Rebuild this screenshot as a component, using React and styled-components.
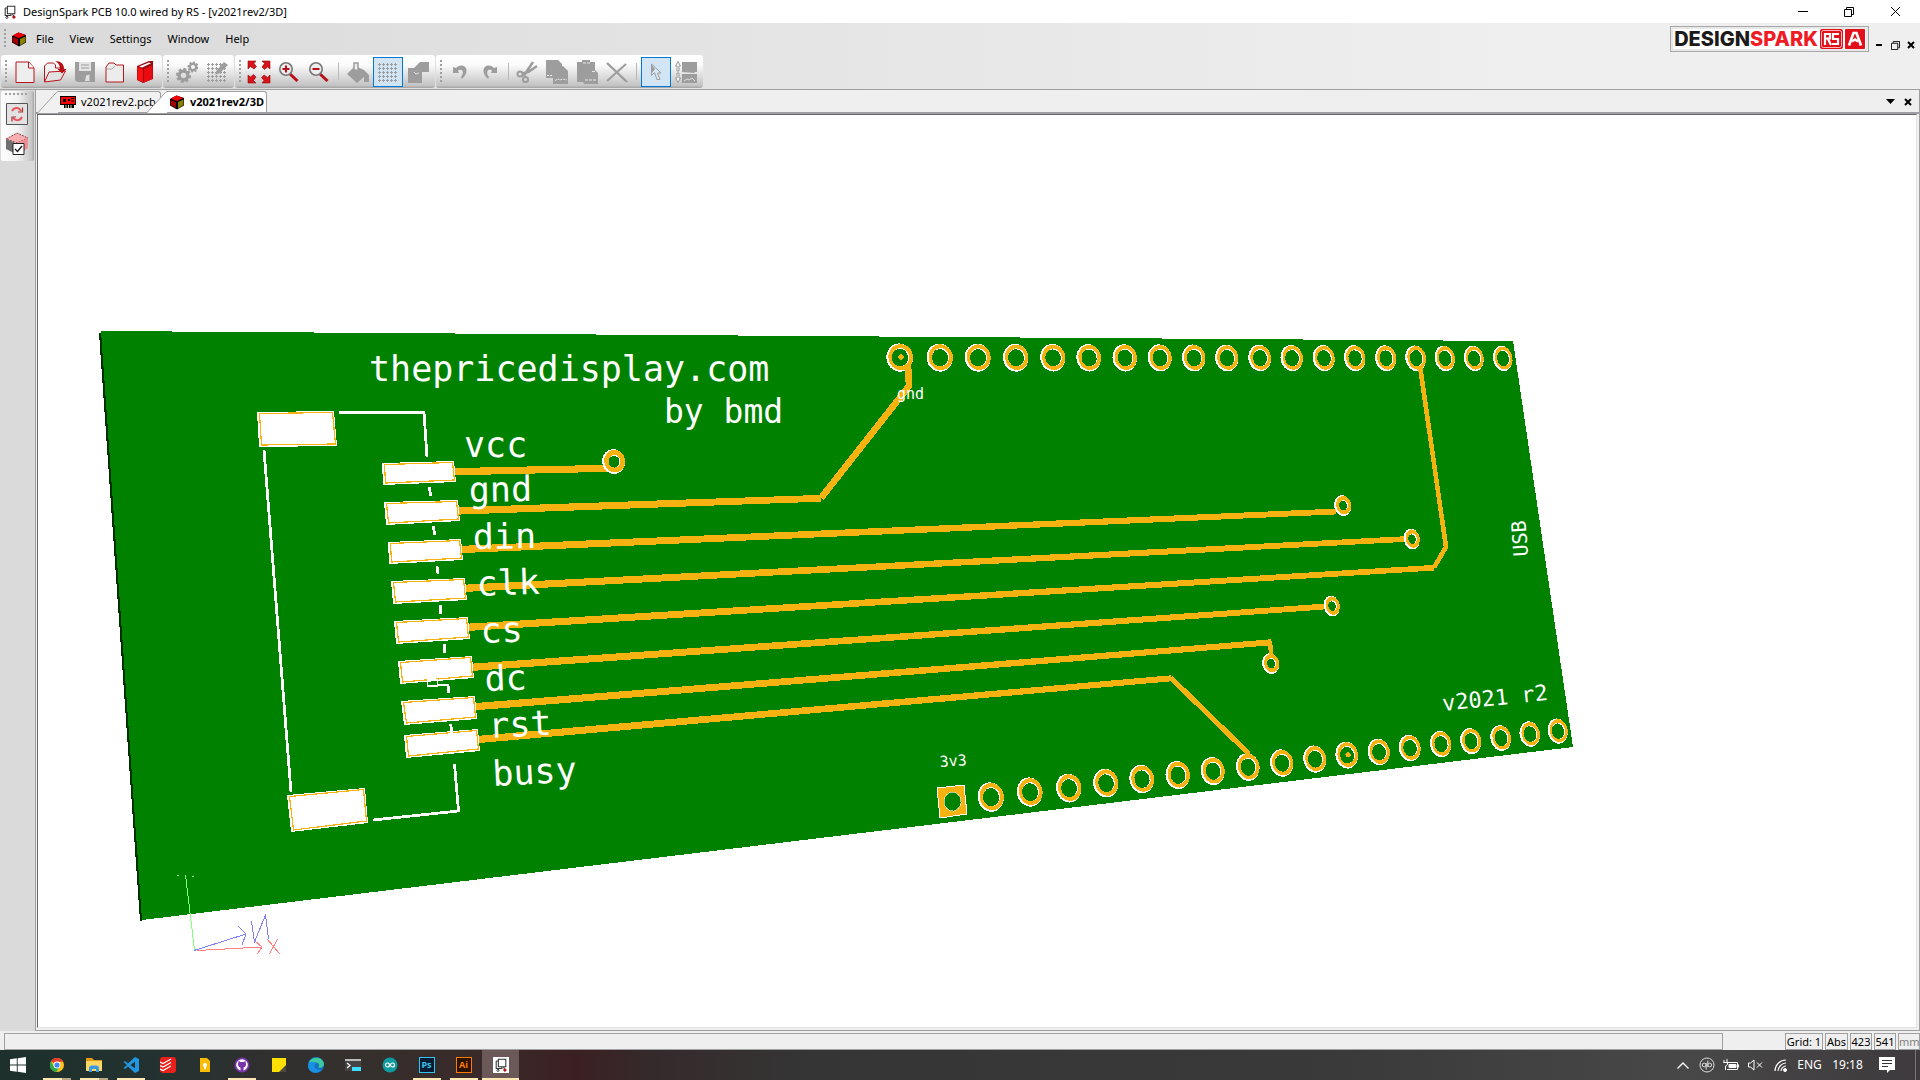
import React from "react";
import styled, { createGlobalStyle, css } from "styled-components";

const ui = `"Noto Sans", "Open Sans", sans-serif`;

const Global = createGlobalStyle`
  * { box-sizing: border-box; }
  body { margin: 0; overflow: hidden; background: #f0f0f0; }
  button { font: inherit; color: inherit; background: none; border: 0; padding: 0; margin: 0; }
  svg { display: block; flex: none; }
`;

const Shell = styled.div`
  display: flex;
  flex-direction: column;
  height: 100vh;
  font: 12px/16px ${ui};
  color: #000;
`;

/* ---------- title bar ---------- */
const TitleBar = styled.header`
  display: flex;
  align-items: center;
  flex: none;
  height: 23px;
  padding: 0 2px 0 3px;
  gap: 6px;
  background: #fff;
`;
const Title = styled.h1`
  flex: 1;
  margin: 0;
  font: 11px/16px ${ui};
  font-weight: 400;
`;
const WindowButtons = styled.div`
  display: flex;
`;
const WindowButton = styled.button`
  width: 46px;
  height: 20px;
  display: flex;
  align-items: center;
  justify-content: center;
`;

/* ---------- menu and tool bars ---------- */
const Chrome = styled.div`
  flex: none;
  background: linear-gradient(90deg, #dadada, #efefef 80%);
  border-bottom: 1px solid #a0a0a0;
`;
const MenuBar = styled.nav`
  display: flex;
  align-items: center;
  height: 32px;
  padding-left: 4px;
`;
const Grip = styled.i`
  flex: none;
  width: ${(p) => (p.$flat ? "24px" : "2px")};
  height: ${(p) => (p.$flat ? "2px" : p.$tall ? "24px" : "20px")};
  background: repeating-linear-gradient(${(p) => (p.$flat ? "90deg" : "180deg")}, #a0a0a0 0 2px, transparent 2px 4px);
`;
const MenuItems = styled.div`
  display: flex;
  flex: 1;
  gap: 16px;
  margin-left: 9px;
  font-size: 11px;
`;
const CubeSlot = styled.span`
  margin-left: 5px;
`;
const Brand = styled.div`
  display: flex;
  align-items: center;
  height: 26px;
  border: 1px solid #a8a8a8;
  padding: 2px;
  background: #e8e8e8;
  margin-right: 2px;
`;
const BrandFace = styled.div`
  display: flex;
  align-items: center;
  gap: 2px;
  height: 20px;
  padding: 0 1px;
  background: #fff;
  font: 800 20px/20px Inter, "Liberation Sans", sans-serif;
  color: #1d1a1b;
`;
const BrandRed = styled.span`
  color: #ee1c25;
`;
const MdiButton = styled.button`
  width: 16px;
  height: 16px;
  display: flex;
  align-items: center;
  justify-content: center;
`;
const MdiButtons = styled.div`
  display: flex;
  align-items: center;
  padding: 12px 1px 0 0;
`;
const ToolRow = styled.div`
  display: flex;
  gap: 1px;
  height: 34px;
  padding: 0 1px 1px;
`;
const ToolGroup = styled.div`
  display: flex;
  align-items: center;
  height: 33px;
  padding: 0 2px 0 4px;
  border-radius: 3px;
  background: linear-gradient(#fff 0, #fbfbfb 30%, #c2c2c2 94%, #a9a9a9 97%);
`;
const Tools = styled.div`
  display: flex;
  align-items: center;
  padding-left: 3px;
`;
const ToolButton = styled.button`
  width: 30px;
  height: 30px;
  display: flex;
  align-items: center;
  justify-content: center;
  ${(p) =>
    p.$on &&
    css`
      background: #d1e5f5;
      border: 1px solid #0078d7;
    `}
`;
const Separator = styled.i`
  width: 1px;
  height: 17px;
  margin: 0 ${(p) => (p.$tight ? 3 : 4)}px;
  background: #b9b9b9;
`;

/* ---------- work area ---------- */
const Work = styled.div`
  display: flex;
  flex: 1;
  min-height: 0;
`;
const Side = styled.aside`
  flex: none;
  width: 35px;
  background: #dadada;
  padding: 1px 1px 0;
`;
const SidePanel = styled.div`
  display: flex;
  flex-direction: column;
  align-items: center;
  height: 70px;
  padding: 2px 2px 0 0;
  border-radius: 2px;
  background: linear-gradient(90deg, #fdfdfd, #f3f3f3 50%, #c4c4c4 94%, #a2a2a2);
`;
const SideTools = styled.div`
  padding-top: 4px;
`;
const Doc = styled.section`
  display: flex;
  flex-direction: column;
  flex: 1;
  min-width: 0;
  border: solid #a0a0a0;
  border-width: 0 1px 1px;
`;
const TabStrip = styled.div`
  display: flex;
  flex: none;
  height: 24px;
  padding: 1px 0 0 2px;
  background: #efefef;
  border-bottom: 2px solid #a0a0a4;
`;
const Tab = styled.button`
  display: flex;
  height: 22px;
  font-size: 11px;
  font-weight: ${(p) => (p.$active ? 700 : 400)};
  & + & { margin-left: -14px; }
`;
const TabBody = styled.span`
  display: flex;
  align-items: center;
  gap: 5px;
  height: 21px;
  width: ${(p) => (p.$active ? "100px" : "103px")};
  white-space: nowrap;
  padding-left: 2px;
  border: solid #a0a0a4;
  border-width: 1px 1px 0 0;
  border-top-right-radius: 3px;
  background: ${(p) => (p.$active ? "#fff" : "#f1f1f1")};
`;
const TabTools = styled.div`
  display: flex;
  align-items: center;
  margin-left: auto;
  gap: 2px;
  padding-right: 3px;
`;
const Frame = styled.main`
  flex: 1;
  min-height: 0;
  margin: 0 2px 2px 1px;
  border: 1px solid #696969;
  border-right-color: #e3e3e3;
  border-bottom-color: #e3e3e3;
  background: #fff;
`;
const Scene = styled.svg`
  width: 100%;
  height: 100%;
  overflow: hidden;
  text {
    fill: #fff;
    font-family: "DejaVu Sans Mono", monospace;
    white-space: pre;
  }
`;

/* ---------- status bar ---------- */
const Status = styled.footer`
  display: flex;
  flex: none;
  gap: 2px;
  height: 19px;
  padding: 2px 0 0 4px;
  background: #efefef;
  font-size: 11px;
`;
const Cell = styled.span`
  width: ${(p) => p.$w}px;
  height: 17px;
  overflow: hidden;
  border: 1px solid #a0a0a0;
  text-align: center;
  white-space: nowrap;
  line-height: 16px;
  color: ${(p) => (p.$dim ? "#808080" : "#000")};
`;
const Message = styled.span`
  flex: 1;
  border: 1px solid #a0a0a0;
  margin-right: 60px;
`;

/* ---------- taskbar ---------- */
const Taskbar = styled.nav`
  display: flex;
  flex: none;
  height: 30px;
  color: #fff;
  background: linear-gradient(90deg, #1d302b 0, #233230 8%, #30302f 14%, #35302d 19%, #3a2829 26%, #3b2023 30%, #352a2b 34%, #353535 42%, #3a3a3a 70%, #484848 88%, #3e3a3d 100%);
`;
const Tasks = styled.div`
  display: flex;
  margin-left: 2px;
`;
const Task = styled.button`
  position: relative;
  display: flex;
  align-items: center;
  justify-content: center;
  width: 37px;
  height: 30px;
  background: ${(p) => (p.$active ? "#6b595a" : "transparent")};
  ${(p) =>
    p.$open &&
    css`
      &::after {
        content: "";
        position: absolute;
        bottom: 0;
        left: ${p.$active ? 0 : 5}px;
        right: ${p.$active ? 0 : 4}px;
        height: 2px;
        background: linear-gradient(90deg, #ffe8b4 ${p.$many ? "68%" : "100%"}, #b8a888 0);
      }
    `}
`;
const StartButton = styled(Task)`
  width: 36px;
`;
const Tray = styled.div`
  display: flex;
  align-items: center;
  margin-left: auto;
  font-size: 12px;
`;
const TrayButton = styled.button`
  width: ${(p) => p.$w || 24}px;
  height: 30px;
  display: flex;
  align-items: center;
  justify-content: center;
`;
const ShowDesktop = styled.button`
  width: 5px;
  height: 30px;
  margin-left: 10px;
  border-left: 1px solid #77757a;
`;

/* ---------- icons ---------- */
const S = ({ w = 22, h = w, vb, children, ...r }) => (
  <svg width={w} height={h} viewBox={vb || `0 0 ${w} ${h}`} fill="none" aria-hidden="true" {...r}>
    {children}
  </svg>
);
const G = "#9d9d9d";

const Cube = ({ size = 16 }) => (
  <S w={size} vb="0 0 16 16">
    <path d="M1 5 7.500 1.500 15 4v7.500L8 15.500 1 11.500z" fill="#000" />
    <path d="M1.500 4.500 7.500 1.500l7 2.500L8 7z" fill="#f00000" />
    <path d="M1.500 6 7 8v6L1.500 11z" fill="#a00000" />
    <path d="M9 8l5.500-2.500V11L9 14.500z" fill="#8a8000" />
  </S>
);
const AppMark = ({ size = 14 }) => (
  <S w={size} vb="0 0 16 16" stroke="#333">
    <path d="M5 1.500h8.500V10H5zM2.500 3.500V12H9V9.500M2.500 3.500h2M11 10.500l1 2M5 12v2" strokeWidth="1.200" />
    <circle cx="4.500" cy="14.200" r="1.200" />
    <circle cx="12.500" cy="13.800" r="1.400" fill="#c00" stroke="#a22" />
  </S>
);
const NewDoc = () => (
  <S><path d="M2 1h13l5 6v14.500H2z" fill="#eee" stroke="#b3161b" /><path d="M14.500 1v6H20" fill="#fff" stroke="#b3161b" /></S>
);
const OpenDoc = () => (
  <S w={24} h={24}><path d="M1.500 22V6l3-3h6l2 2v3h7v4" fill="#f3f3f3" stroke="#b3161b" /><path d="M1.500 22 6 12l16.500-1-5 9z" fill="#e2e2e2" stroke="#b3161b" />
    <path d="M12 1c6 0 9 3 9 8h2.500L19 13.500 14.500 9H17c0-3-1-6-5-8z" fill="#b80f16" /></S>
);
const Save = () => (
  <S><path d="M1 1h20v20H3l-2-2z" fill={G} /><path d="M5 1h12v9H5z" fill="#e4e4e4" /><path d="M7 4h8M7 7h8" stroke={G} /><path d="M12 14.500l3.500-1V20H11z" fill="#e0e0e0" /></S>
);
const Folder = () => (
  <S><path d="M2 21V6l3-4h5l2 2h7.500v17z" fill="#ececec" stroke="#b3161b" /><path d="M2.500 8H8l3-3" stroke="#aaa" /></S>
);
const Book = () => (
  <S><path d="M3 5 15 0h4v18l-10 4-6-3z" fill="#9b0a10" /><path d="M3.500 6 9 8v13l-5.500-2z" fill="#f11" /><path d="M10 8l8.500-4v14L10 21.500z" fill="#e80c12" /><path d="M5 5.500l10-4 2 .8L8 6.500z" fill="#fff" /></S>
);
const Gear = ({ x, y, r }) => (
  <g transform={`translate(${x} ${y})`} stroke={G}>
    <circle r={r * 0.58} strokeWidth={r * 0.42} />
    {[0, 45, 90, 135].map((a) => (
      <path key={a} transform={`rotate(${a + 12})`} d={`M0 ${-r}V${-r * 0.6}M0 ${r * 0.6}V${r}`} strokeWidth={r * 0.4} />
    ))}
  </g>
);
const Gears = () => (<S><Gear x={7.5} y={14.500} r={7.500} /><Gear x={17} y={6} r={5.500} /></S>);
const Dots = ({ children }) => (
  <S w={22}>
    <path d="M1 3.500h20M1 7.500h20M1 11.500h20M1 15.500h20M1 19.500h20" stroke={G} strokeDasharray="3 1" />
    <path d="M2.500 2v20M6.500 2v20M10.500 2v20M14.500 2v20M18.500 2v20" stroke={G} strokeDasharray="3 1" />
    {children}
  </S>
);
const GridEdit = () => (<Dots><path d="M9 14l2-5 7-8 4 3-8 8z" fill={G} /></Dots>);
const Fit = () => (
  <S w={24}>
    {[0, 90, 180, 270].map((a) => (
      <path key={a} transform={`rotate(${a} 12 12)`} d="M1 1h8L7 3.500l2.500 3-2.500 2.500-3.500-2.500L1 9z" fill="#d8141a" stroke="#8c0a0e" strokeWidth=".6" />
    ))}
  </S>
);
const Zoom = ({ plus }) => (
  <S><path d="M12 13l7.500 7" stroke="#b80f16" strokeWidth="3" /><circle cx="8" cy="8" r="6.200" fill="#eee" stroke="#777" strokeWidth="1.600" />
    <path d={plus ? "M4.500 8h7M8 4.500v7" : "M4.500 8h7"} stroke="#b80f16" strokeWidth="2" /></S>
);
const Bucket = () => (
  <S><path d="M0 13 8 5l9 4 5 5v7h-5v-5l-7 6z" fill={G} /><path d="M7 8V2h4v7" stroke={G} strokeWidth="1.500" fill="#eee" /></S>
);
const Shape = () => (<S><path d="M1 7h6l6-6h9v10h-7v12H1z" fill={G} /><path d="M7 11l2 2 3-1" stroke="#ddd" /></S>);
const Undo = ({ flip }) => (
  <S w={14} h={16} style={flip ? { transform: "scaleX(-1)" } : undefined}>
    <path d="M0 3l3 1c4-4 10-3 10.500 2 .2 4-2 6.500-4.500 9l-1-2c1.500-2 2.500-4 1.500-6S6.500 5.500 5 6.500L6 9H0z" fill={G} />
  </S>
);
const Scissors = () => (
  <S stroke={G} strokeWidth="2"><path d="M17 1 11 10 7.500 15M21 5l-8 5.500-6 2" strokeWidth="2.600" /><circle cx="4" cy="13" r="2.500" /><circle cx="9.500" cy="18.500" r="2.600" /></S>
);
const Copy = () => (
  <S w={24}><path d="M1 0h12l4 4v14H1z" fill={G} /><path d="M8 6h10l5 5v13H8z" fill={G} /><path d="M2 15.500h5M10 20.500l3-1.500 2 1 3-1 4 1" stroke="#eee" strokeDasharray="2 1" /></S>
);
const Paste = () => (
  <S w={22} h={24}><path d="M1 2h5V0h8v2h5v8l3 3v11H8l-1-2H1z" fill={G} /><path d="M7 3h7M9 20h11M16 11.500h3" stroke="#e6e6e6" strokeDasharray="3 1" /></S>
);
const Cross = () => (<S w={22} stroke={G}><path d="M1 2l20 19" strokeWidth="2.400" /><path d="M20 3 1 20" strokeWidth="2" /></S>);
const Pointer = () => (
  <S w={12} h={18}><path d="M1.500 1v11.500l3-3 2.500 7h3l-2.500-6.500H11z" stroke={G} fill="#dbe9f4" /><path d="M1 1v10l4-5z" fill={G} /></S>
);
const Swap = () => (
  <S w={24}><path d="M8 2h15v10h-2l-1 1-12-1zM8 14h15v9H8z" fill={G} /><path d="M4 1.500 6.500 6H5v5H3V6H1.500zM4 22.500 6.500 18H5v-5H3v5H1.500z" fill="#eee" stroke={G} /><path d="M10 21l3-2 2 1 3-2 3 3" stroke="#ddd" /></S>
);
const Refresh = () => (
  <S w={22}><path d="M.5.500h21v21H.5z" fill="#e2e2e2" stroke="#555" />
    <path d="M6 8c2-4 7-4 9 0M16 14c-2 4-6 4-9 1" stroke="#e5555a" strokeWidth="2" />
    <path d="M16.500 4.500V9H12M6 18.500V14h4" stroke="#a33" strokeWidth="1.200" /></S>
);
const CubeCheck = () => (
  <S w={24}><path d="M1 7 12 1l11 5-11 5z" fill="#f9adb0" stroke="#844" strokeDasharray="2 1" /><path d="M1 7l8 3v11l-8-4z" fill="#707070" /><path d="M12 11l11-5v10l-4 3z" fill="#f19094" />
    <path d="M8 11.500h11v11H8z" fill="#fff" stroke="#222" /><path d="M10 17l2.500 2.500L17 14" stroke="#222" strokeWidth="1.500" /></S>
);
const PcbIcon = () => (
  <S w={16} h={14}><path d="M0 1h16v9h-2v3H4v-3H0z" fill="#000" /><path d="M1 2h14v7H1z" fill="#f00" /><path d="M3 4h3v3H3zM8 4h2v2H8z" fill="#000" /><path d="M11 3.500h3M11 6h3" stroke="#000" /><path d="M6 10v3M8.500 10v3M11 10v3" stroke="#dca" /></S>
);
const XMark = ({ size = 10, weight = 1 }) => (<S w={size} stroke="#000" strokeWidth={weight}><path d={`M1 1l${size - 2} ${size - 2}M${size - 1} 1l${2 - size} ${size - 2}`} /></S>);
const Minus = ({ size = 10, weight = 1 }) => (<S w={size} h={2} stroke="#000" strokeWidth={weight}><path d={`M0 ${weight / 2}h${size}`} /></S>);
const Restore = ({ size = 10 }) => (<S w={size} vb="0 0 10 10" stroke="#000"><path d="M.5 2.500h7v7h-7zM2.500 2V.5h7v7H8" /></S>);

const RsMark = () => (
  <S w={23} h={20} vb="0 0 23 20"><rect width="23" height="20" rx="2" fill="#e2101a" /><rect x="1.500" y="1.500" width="20" height="17" rx="2" stroke="#fff" strokeWidth=".7" />
    <path d="M5 16V5h5v4.500H6M8 10l3 6M19 5h-6v5h5v5h-6" stroke="#fff" strokeWidth="2.200" /></S>
);
const AMark = () => (
  <S w={20}><rect width="20" height="20" rx="1" fill="#e2101a" /><path d="M4 16.500 8.500 4h3L16 16.500M7 12.500l3-2 3 2" stroke="#fff" strokeWidth="2.600" /></S>
);

/* taskbar icons */
const Win = () => (<S w={16}><path d="M0 2.300 6.800 1.300v6.300H0zM7.700 1.200 16 0v7.600H7.700zM0 8.500h6.800v6.200L0 13.700zM7.700 8.500H16V16l-8.300-1.200z" fill="#fff" /></S>);
const ChromeIcon = () => (
  <S w={16}><circle cx="8" cy="8" r="7" fill="#fcc31e" /><path d="M8 8 2 4.200A7 7 0 0 1 14.200 4.800H8z" fill="#e33b2e" /><path d="M8 8l-2.500 3L2 4.300A7 7 0 0 0 7.300 15L11 9.500z" fill="#2da94f" /><circle cx="8" cy="8" r="3.400" fill="#fff" /><circle cx="8" cy="8" r="2.600" fill="#4285f4" /></S>
);
const Files = () => (<S w={16}><path d="M0 1h6l2 2h8v4H0z" fill="#e19a10" /><path d="M0 4h16v10H0z" fill="#fdd663" /><path d="M3 15v-5l2-1.500h6l2 1.500v5h-3v-3H6v3z" fill="#3a9be6" /></S>);
const Code = () => (<S w={16}><path d="M12 0l4 2v12l-4 2-7-6.500L2 12 .5 11l3.500-3L.5 5 2 4l3 2.500zM12 4.500 7.500 8l4.500 3.500z" fill="#2196e3" fillRule="evenodd" /></S>);
const Todo = () => (<S w={16}><rect width="16" height="16" rx="3" fill="#e8211a" /><path d="M0 5l3 1.500L11 2M0 8.500 3 10l8-4.500M0 12l3 1.500L11 9" stroke="#fff" strokeWidth="1.200" /></S>);
const Keep = () => (<S w={16}><path d="M3 1h7l3 3v11H3z" fill="#fbbc04" /><circle cx="8" cy="8" r="2" fill="#fff" /><path d="M7 10h2v2H7z" fill="#fff" /></S>);
const Hub = () => (<S w={16}><circle cx="8" cy="8" r="7.500" fill="#7a32a8" /><circle cx="8" cy="8" r="5.800" fill="#fff" /><path d="M4.500 4l2 1h3l2-1 .5 3.500c0 2-1.500 3-2.500 3V14h-3v-3.500C5 10.500 4 9 4 7.500z" fill="#7a32a8" /></S>);
const Note = () => (<S w={16}><path d="M1 1h14v8l-6 6H1z" fill="#ffe000" /><path d="M15 8v7H8z" fill="#4a4a40" /></S>);
const Edge = () => (<S w={16}><circle cx="8" cy="8" r="8" fill="#1272c4" /><path d="M1 5C4-1 15-1 16 7c0 3-3 4.500-6 3.500 2-1.500 1-5-2-5S2 7 1 5z" fill="#3cc8a0" /><path d="M0 8c1-4 7-4 8-1-3 1-2 6 5 6-4 4.500-13 3.500-13-5z" fill="#1b8fe0" /></S>);
const Term = () => (<S w={16}><path d="M0 2h16v12H0z" fill="#444" /><path d="M0 2h16v2H0z" fill="#bbb" /><path d="M2 6l3 2.500L2 11" stroke="#fff" strokeWidth="1.200" /><path d="M7 10h9v4H7z" fill="#3ddcff" /></S>);
const Ardu = () => (<S w={16}><circle cx="8" cy="8" r="7.500" fill="#0f9a9f" /><circle cx="5.500" cy="8" r="2" stroke="#fff" strokeWidth="1.200" /><circle cx="10.500" cy="8" r="2" stroke="#fff" strokeWidth="1.200" /></S>);
const AppLetter = styled.span`
  width: 16px;
  height: 16px;
  border: 1px solid ${(p) => p.$c};
  background: ${(p) => p.$bg};
  color: ${(p) => p.$c};
  font: 700 9px/13px "Open Sans", sans-serif;
  text-align: center;
`;
const White = styled.span`
  padding: 1px;
  background: #fff;
`;

/* ---------- board ---------- */
const ORANGE = "#f5b210";
const GREEN = "#008200";

const pads = [
  [257, 412, 334, 411, 337, 446, 259, 447],
  [382, 463, 454, 461, 456, 482, 383, 485],
  [384, 502, 458, 500, 460, 521, 386, 525],
  [388, 542, 461, 539, 463, 560, 389, 564],
  [391, 581, 465, 578, 467, 600, 393, 604],
  [394, 621, 468, 617, 470, 639, 396, 644],
  [398, 661, 472, 656, 474, 678, 400, 684],
  [401, 701, 475, 696, 477, 719, 404, 725],
  [404, 735, 478, 729, 480, 751, 406, 758],
  [287, 795, 365, 788, 368, 823, 291, 832],
];
const Pad = ({ p }) => {
  const [a, b, c, d, e, f, g, h] = p;
  return (
    <g>
      <polygon points={p.join(" ")} fill="#fff" />
      <polygon points={[a + 2.5, b + 1.5, c - 1.5, d + 1.5, e - 1.5, f - 2, g + 2.5, h - 2].join(" ")} stroke={ORANGE} strokeWidth="1.200" fill="none" />
    </g>
  );
};

/* straight copper run: x1, y1, x2, y2, with its thickness easing off with distance */
const runs = [
  [454, 471.7, 609, 468.3, 7.3, 7],
  [457, 511, 821, 498.3, 7.3, 6.8],
  [461, 549.5, 1336, 511.5, 7.3, 5.8],
  [465, 588.3, 1406, 539, 7.3, 5.6],
  [468, 627.3, 1434, 567.7, 7.3, 5.6],
  [472, 667.3, 1325, 606.5, 7.3, 5.8],
  [475, 706.7, 1271, 642.3, 7.3, 6],
  [478, 739.5, 1171, 678.3, 7.3, 6],
];
const bends = [
  ["821,498 909,386 908,364", 6.6],
  ["1434,567.500 1446,547 1420,366", 4.6],
  ["1270,641 1271,654", 4.4],
  ["1171,678 1247,752 1248,757", 5.2],
];
const topPins = [900, 940, 978, 1016, 1053, 1089, 1125, 1160, 1194, 1227, 1260, 1292, 1324, 1355, 1386, 1416, 1445, 1474, 1503];
const lowPins = [
  [991, 797], [1030, 792], [1069, 788], [1106, 783], [1142, 779], [1178, 775], [1213, 771], [1248, 767], [1282, 763],
  [1315, 759], [1347, 755], [1379, 752], [1410, 748], [1441, 744], [1471, 741], [1501, 738], [1530, 734], [1558, 731],
];
const vias = [[614, 461.500, 11.5, 12.500], [1343, 505.500, 8.500, 10.500], [1412, 539, 8, 10.500], [1332, 606, 8, 10.500], [1271, 663.500, 8.500, 10.500]];

const Ring = ({ x, y, rx, ry, hole = 0.64, dot }) => (
  <g transform={`rotate(-12 ${x} ${y})`}>
    <ellipse cx={x - 0.3} cy={y} rx={rx} ry={ry} fill="#fff" />
    <ellipse cx={x + 0.8} cy={y - 0.2} rx={rx - 1} ry={ry - 1.2} fill={ORANGE} />
    <ellipse cx={x + 0.8} cy={y - 0.2} rx={rx * hole} ry={ry * hole} fill="#fff" />
    <ellipse cx={x} cy={y + 0.2} rx={rx * hole - 0.3} ry={ry * hole - 0.4} fill={GREEN} />
    {dot && <circle cx={x + 1} cy={y} r="2.600" fill={ORANGE} />}
  </g>
);

const silk = [
  ["thepricedisplay.com", 369, 381, 0, 35],
  ["by bmd", 664, 423, 0, 33],
  ["vcc", 464, 457, 0, 35],
  ["gnd", 469, 502, -1, 35],
  ["din", 473, 549, -1, 35],
  ["clk", 477, 596, -2, 35],
  ["cs", 481, 643, -2, 35],
  ["dc", 485, 691, -2, 35],
  ["rst", 489, 738, -3, 35],
  ["busy", 493, 786, -3, 35],
  ["gnd", 897, 399, 0, 15],
  ["3v3", 940, 767, -4, 15],
  ["v2021 r2", 1443, 711, -6, 22],
  ["USB", 1528, 556, -94, 20],
];

const Board = () => (
  <Scene viewBox="38 115 1878 912" preserveAspectRatio="xMinYMin meet" role="img" aria-label="3D view of the circuit board">
    <g shapeRendering="crispEdges">
      <polygon points="99,333 102,333 143,920 140,921" fill="#003000" />
      <polygon points="101,331 1513,341 1573,747 142,920" fill={GREEN} />
      {runs.map(([x1, y1, x2, y2, a, b], i) => (
        <polygon key={i} fill={ORANGE} points={`${x1},${y1 - a / 2} ${x2},${y2 - b / 2} ${x2},${y2 + b / 2} ${x1},${y1 + a / 2}`} />
      ))}
      {topPins.map((x, i) => <Ring key={x} x={x} y={357.5 + i * 0.05} rx={13.3 - i * 0.2} ry={14.2 - i * 0.08} dot={i === 0} />)}
      {lowPins.map(([x, y], i) => <Ring key={x} x={x} y={y} rx={13 - i * 0.18} ry={14.800 - i * 0.12} dot={i === 10} />)}
      {vias.map(([x, y, rx, ry]) => <Ring key={x} x={x} y={y} rx={rx} ry={ry} hole={0.5} />)}
      <polygon points="937,788 964,785 967,814 940,818" fill={ORANGE} stroke="#fff" />
      <ellipse cx="952.500" cy="801.500" rx="8.500" ry="9.500" fill={GREEN} stroke="#fff" strokeWidth=".6" />
      {bends.map(([d, w]) => <polyline key={d} points={d} stroke={ORANGE} strokeWidth={w} fill="none" strokeLinejoin="round" />)}
      <ellipse cx="900" cy="357.500" rx="8" ry="8.800" fill={GREEN} />
      <circle cx="901" cy="357" r="2.800" fill={ORANGE} />
      <ellipse cx="1416" cy="358" rx="6" ry="8" fill={GREEN} />
      {pads.map((p) => <Pad key={p[0]} p={p} />)}
      <g stroke="#fff" fill="none" strokeWidth="2.800">
        <path d="M339 412.500H424L427 457M264 450 291 792M454.500 764l4 47L373 820" />
        <path d="M429.500 487l1 9M433.500 526l1 9M437 566l1 8M440.500 605v9M444.300 644v9M448 684l.6 9M450.700 724l1.300 9" strokeWidth="2.800" />
        <path d="M427.500 680h10v6h-10zM437.500 685h11" strokeWidth="1.200" />
      </g>
    </g>
    {silk.map(([t, x, y, a, size]) => (
      <text key={t + y} x={x} y={y} fontSize={size} transform={`rotate(${a} ${x} ${y})`}>{t}</text>
    ))}
    <g fill="none" shapeRendering="crispEdges">
      <path d="M185.500 875l9 75M177 875.500h2M192 876h2" stroke="#80ff80" />
      <path d="M194 950.500 246 934M238 926l8 8-4 11M251.500 921l3 21 11-27 3 24" stroke="#8080ff" />
      <path d="M197 950.500 262 947M255 941l7 6-4.500 7M267 939l13 15M277.500 939l-8 15" stroke="#ff8080" />
    </g>
  </Scene>
);

const fileTools = [["New", NewDoc], ["Open", OpenDoc], ["Save", Save], ["Open folder", Folder], ["Library", Book]];
const tasks = [
  ["Chrome", <ChromeIcon />, { $open: true, $many: true }],
  ["File Explorer", <Files />, { $open: true, $many: true }],
  ["Visual Studio Code", <Code />, { $open: true }],
  ["Todoist", <Todo />, {}],
  ["Keep", <Keep />, {}],
  ["GitHub", <Hub />, { $open: true }],
  ["Sticky Notes", <Note />, {}],
  ["Edge", <Edge />, {}],
  ["Terminal", <Term />, {}],
  ["Arduino", <Ardu />, {}],
  ["Photoshop", <AppLetter $c="#31c5f0" $bg="#071c33">Ps</AppLetter>, { $open: true }],
  ["Illustrator", <AppLetter $c="#ff7c00" $bg="#2a1200">Ai</AppLetter>, { $open: true }],
  ["DesignSpark PCB", <White><AppMark /></White>, { $open: true, $active: true }],
];

const Tool = ({ name, icon: Icon, on, ...rest }) => (
  <ToolButton aria-label={name} title={name} $on={on}><Icon {...rest} /></ToolButton>
);
const Slant = ({ active }) => (
  <S w={20} h={22}><path d="M0 22 17 3q2-2 3-2.500V22z" fill={active ? "#fff" : "#f1f1f1"} /><path d="M0 21.500 17 3q2-2 3-2.500" stroke="#a0a0a4" /></S>
);

export default function App() {
  return (
    <Shell>
      <Global />
      <TitleBar>
        <AppMark />
        <Title>DesignSpark PCB 10.0 wired by RS - [v2021rev2/3D]</Title>
        <WindowButtons>
          <WindowButton aria-label="Minimize"><Minus /></WindowButton>
          <WindowButton aria-label="Restore"><Restore /></WindowButton>
          <WindowButton aria-label="Close"><XMark size={11} /></WindowButton>
        </WindowButtons>
      </TitleBar>

      <Chrome>
        <MenuBar>
          <Grip />
          <CubeSlot><Cube /></CubeSlot>
          <MenuItems>
            {["File", "View", "Settings", "Window", "Help"].map((m) => <button key={m}>{m}</button>)}
          </MenuItems>
          <Brand>
            <BrandFace><span>DESIGN<BrandRed>SPARK</BrandRed></span><RsMark /><AMark /></BrandFace>
          </Brand>
          <MdiButtons>
            <MdiButton aria-label="Minimize document"><Minus size={6} weight={2} /></MdiButton>
            <MdiButton aria-label="Restore document"><Restore size={9} /></MdiButton>
            <MdiButton aria-label="Close document"><XMark size={8} weight={2} /></MdiButton>
          </MdiButtons>
        </MenuBar>
        <ToolRow>
          <ToolGroup><Grip $tall /><Tools>{fileTools.map(([n, I]) => <Tool key={n} name={n} icon={I} />)}</Tools></ToolGroup>
          <ToolGroup><Grip $tall /><Tools><Tool name="Options" icon={Gears} /><Tool name="Edit grid" icon={GridEdit} /></Tools></ToolGroup>
          <ToolGroup>
            <Grip $tall />
            <Tools>
              <Tool name="View all" icon={Fit} /><Tool name="Zoom in" icon={Zoom} plus /><Tool name="Zoom out" icon={Zoom} />
              <Separator />
              <Tool name="Fill" icon={Bucket} /><Tool name="Grid" icon={Dots} on /><Tool name="Shape" icon={Shape} />
            </Tools>
          </ToolGroup>
          <ToolGroup>
            <Grip $tall />
            <Tools>
              <Tool name="Undo" icon={Undo} /><Tool name="Redo" icon={Undo} flip />
              <Separator $tight />
              <Tool name="Cut" icon={Scissors} /><Tool name="Copy" icon={Copy} /><Tool name="Paste" icon={Paste} /><Tool name="Delete" icon={Cross} />
              <Separator />
              <Tool name="Select" icon={Pointer} on /><Tool name="Swap" icon={Swap} />
            </Tools>
          </ToolGroup>
        </ToolRow>
      </Chrome>

      <Work>
        <Side>
          <SidePanel>
            <Grip $flat />
            <SideTools>
              <ToolButton aria-label="Refresh"><Refresh /></ToolButton>
              <ToolButton aria-label="3D options"><CubeCheck /></ToolButton>
            </SideTools>
          </SidePanel>
        </Side>
        <Doc>
          <TabStrip>
            <Tab><Slant /><TabBody><PcbIcon />v2021rev2.pcb</TabBody></Tab>
            <Tab $active><Slant active /><TabBody $active><Cube />v2021rev2/3D</TabBody></Tab>
            <TabTools>
              <MdiButton aria-label="Tab list"><S w={9} h={5}><path d="M0 0h9L4.500 5z" fill="#000" /></S></MdiButton>
              <MdiButton aria-label="Close tab"><XMark size={8} weight={2} /></MdiButton>
            </TabTools>
          </TabStrip>
          <Frame><Board /></Frame>
        </Doc>
      </Work>

      <Status>
        <Message />
        <Cell $w={38}>Grid: 1</Cell>
        <Cell $w={23}>Abs</Cell>
        <Cell $w={22}>423</Cell>
        <Cell $w={22}>541</Cell>
        <Cell $w={22} $dim>mm</Cell>
      </Status>

      <Taskbar>
        <StartButton aria-label="Start"><Win /></StartButton>
        <Tasks>
          {tasks.map(([n, icon, flags]) => <Task key={n} aria-label={n} {...flags}>{icon}</Task>)}
        </Tasks>
        <Tray>
          <TrayButton aria-label="Show hidden icons"><S w={12} h={7} stroke="#fff" strokeWidth="1.300"><path d="M.5 6.500 6 1l5.500 5.500" /></S></TrayButton>
          <TrayButton aria-label="qBittorrent">
            <S w={16} stroke="#ddd"><circle cx="8" cy="8" r="7" /><circle cx="5.200" cy="8" r="1.900" /><circle cx="10.700" cy="8" r="1.900" /><path d="M7.200 6v6.500M8.800 3.500V10" /></S>
          </TrayButton>
          <TrayButton aria-label="Battery"><S w={16} h={12} stroke="#fff"><path d="M3 3.500h11.500v7H4M15.500 5.500v3M1 1v3M4 0v3M.5 3.500h4v2l-2 1.500v4" /><path d="M6 5.500h7v3H6z" fill="#fff" /></S></TrayButton>
          <TrayButton aria-label="Volume"><S w={15} h={12} stroke="#fff"><path d="M.5 4h2L6 1v10L2.500 8h-2zM9 3.500l5 5M14 3.500l-5 5" /></S></TrayButton>
          <TrayButton $w={26} aria-label="Network"><S w={13} stroke="#fff"><path d="M1 12C1 6 6 1 12 1M4 12c0-4 4-8 8-8M7 12c0-2.500 2.500-5 5-5" strokeWidth="1.100" /><circle cx="11" cy="11" r="1.500" fill="#fff" /></S></TrayButton>
          <TrayButton $w={33}>ENG</TrayButton>
          <TrayButton $w={43}>19:18</TrayButton>
          <TrayButton $w={36} aria-label="Notifications"><S w={16}><path d="M0 0h16v13h-5l-3 3v-3H0z" fill="#fff" /><path d="M3 3.500h10M3 6.500h10M3 9.500h6" stroke="#333" /></S></TrayButton>
          <ShowDesktop aria-label="Show desktop" />
        </Tray>
      </Taskbar>
    </Shell>
  );
}
